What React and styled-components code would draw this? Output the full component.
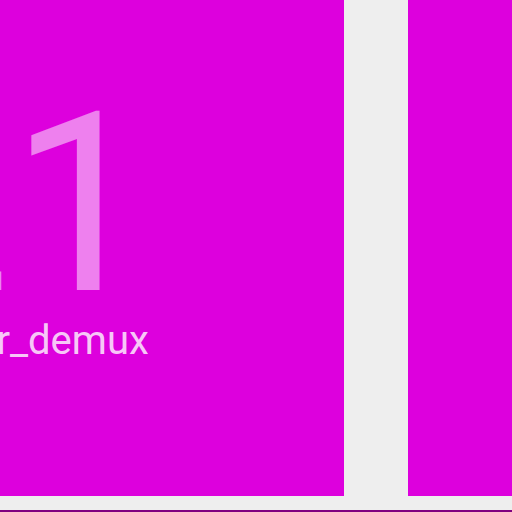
import styled, { createGlobalStyle } from "styled-components";

const Global = createGlobalStyle`
  html, body {
    margin: 0;
    padding: 0;
    background: #eeeeee;
    overflow: hidden;
  }
  body {
    font-family: Roboto, "Noto Sans", sans-serif;
  }
`

const Screen = styled.div`
  width: 512px;
  height: 512px;
  display: flex;
  flex-direction: column;
  overflow: hidden;
`

const TileRow = styled.div`
  display: flex;
  gap: 64px;
  height: 496px;
  flex-shrink: 0;
`

const Tile = styled.div`
  background: #dd00dd;
  width: ${p => p.width}px;
  flex-shrink: 0;
  overflow: hidden;
  display: flex;
  flex-direction: column;
  padding-top: 80px;
  box-sizing: border-box;
`

const BigValue = styled.div`
  font-size: 250px;
  font-weight: 400;
  line-height: 1;
  color: rgba(255, 255, 255, 0.5);
  white-space: nowrap;
  margin-left: -130px;
`

const Label = styled.div`
  font-size: 40px;
  font-weight: 400;
  color: rgba(255, 255, 255, 0.8);
  white-space: nowrap;
  margin-left: -82px;
  margin-top: -13px;
`

const Spacer = styled.div`
  flex: 1;
`

const BottomBar = styled.div`
  height: 2px;
  background: #800080;
`

const App = () => {
  return (
    <Screen>
      <Global />
      <TileRow>
        <Tile width={344}>
          <BigValue>21</BigValue>
          <Label>tuner_demux</Label>
        </Tile>
        <Tile width={200} />
      </TileRow>
      <Spacer />
      <BottomBar />
    </Screen>
  )
}

export default App;
